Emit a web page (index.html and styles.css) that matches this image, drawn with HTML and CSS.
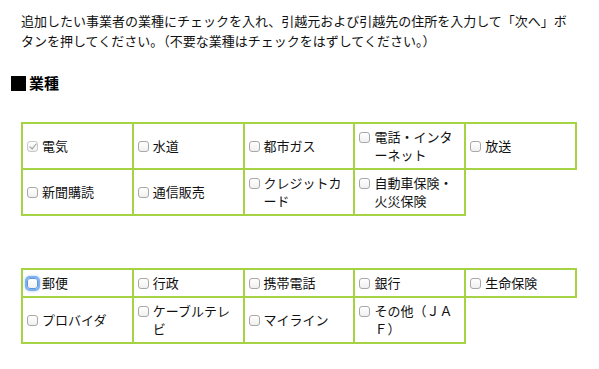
FILE: index.html
```html
<!DOCTYPE html>
<html lang="ja">

<head>
  <meta charset="UTF-8">
  <title>業種の選択</title>
  <link rel="stylesheet" href="styles.css">
</head>

<body>
  <div class="container">
    <p class="lead">追加したい事業者の業種にチェックを入れ、引越元および引越先の住所を入力して「次へ」ボタンを押してください。（不要な業種はチェックをはずしてください。）</p>

    <h2 class="heading"><span class="mark"></span>業種</h2>

    <form id="categoryForm">
      <table class="category">
        <tr>
          <td><label class="item"><input type="checkbox" class="cb" checked disabled><span>電気</span></label></td>
          <td><label class="item"><input type="checkbox" class="cb"><span>水道</span></label></td>
          <td><label class="item"><input type="checkbox" class="cb"><span>都市ガス</span></label></td>
          <td><label class="item"><input type="checkbox" class="cb"><span>電話・インターネット</span></label></td>
          <td><label class="item"><input type="checkbox" class="cb"><span>放送</span></label></td>
        </tr>
        <tr>
          <td><label class="item"><input type="checkbox" class="cb"><span>新聞購読</span></label></td>
          <td><label class="item"><input type="checkbox" class="cb"><span>通信販売</span></label></td>
          <td><label class="item"><input type="checkbox" class="cb"><span>クレジットカード</span></label></td>
          <td><label class="item"><input type="checkbox" class="cb"><span>自動車保険・火災保険</span></label></td>
          <td class="empty"></td>
        </tr>
      </table>

      <table class="category second">
        <tr>
          <td><label class="item"><input type="checkbox" class="cb focus"><span>郵便</span></label></td>
          <td><label class="item"><input type="checkbox" class="cb"><span>行政</span></label></td>
          <td><label class="item"><input type="checkbox" class="cb"><span>携帯電話</span></label></td>
          <td><label class="item"><input type="checkbox" class="cb"><span>銀行</span></label></td>
          <td><label class="item"><input type="checkbox" class="cb"><span>生命保険</span></label></td>
        </tr>
        <tr>
          <td><label class="item"><input type="checkbox" class="cb"><span>プロバイダ</span></label></td>
          <td><label class="item"><input type="checkbox" class="cb"><span>ケーブルテレビ</span></label></td>
          <td><label class="item"><input type="checkbox" class="cb"><span>マイライン</span></label></td>
          <td><label class="item"><input type="checkbox" class="cb"><span>その他（ＪＡＦ）</span></label></td>
          <td class="empty"></td>
        </tr>
      </table>
    </form>
  </div>
</body>

</html>
```

FILE: styles.css
```css
/* 業種選択ページ */
body {
  font-family: "Noto Sans CJK JP", "Noto Sans", sans-serif;
  color: #111;
  background-color: #fff;
  margin: 0;
  padding: 0;
}

.container {
  padding: 11px 22px 0 21px;
}

.lead {
  margin: 0;
  font-size: 13px;
  line-height: 20px;
}

.heading {
  display: flex;
  align-items: center;
  gap: 3px;
  margin: 22px 0 29px -10px;
  font-size: 15px;
  line-height: 20px;
  font-weight: bold;
  color: #000;
}

.heading .mark {
  display: inline-block;
  width: 15px;
  height: 15px;
  background-color: #000;
}

.category {
  width: 556px;
  table-layout: fixed;
  border-collapse: collapse;
  font-size: 13px;
  line-height: 18px;
}

.category.second {
  margin-top: 52px;
}

.category td {
  width: 20%;
  border: 2px solid #a6d343;
  padding: 4px 5px 4px 4px;
  vertical-align: middle;
}

.category td.empty {
  border: none;
  border-left: 2px solid #a6d343;
}

.item {
  display: flex;
  align-items: flex-start;
  gap: 4px;
}

/* チェックボックス */
.cb {
  appearance: none;
  -webkit-appearance: none;
  flex: none;
  position: relative;
  width: 11px;
  height: 11px;
  margin: 4px 0 0 0;
  border: 1px solid #a8a8a8;
  border-radius: 3px;
  background: linear-gradient(#fff, #f0f0f0);
}

.cb:checked::after {
  content: "";
  position: absolute;
  left: 3px;
  top: 0px;
  width: 3px;
  height: 6px;
  border: solid #999;
  border-width: 0 1.5px 1.5px 0;
  transform: rotate(40deg);
}

.cb:disabled {
  border-color: #c8c8c8;
}

.cb.focus {
  border-color: #5c97e0;
  box-shadow: 0 0 0 2px rgba(110, 165, 235, 0.8), 0 0 3px 2px rgba(110, 165, 235, 0.6);
}
```
